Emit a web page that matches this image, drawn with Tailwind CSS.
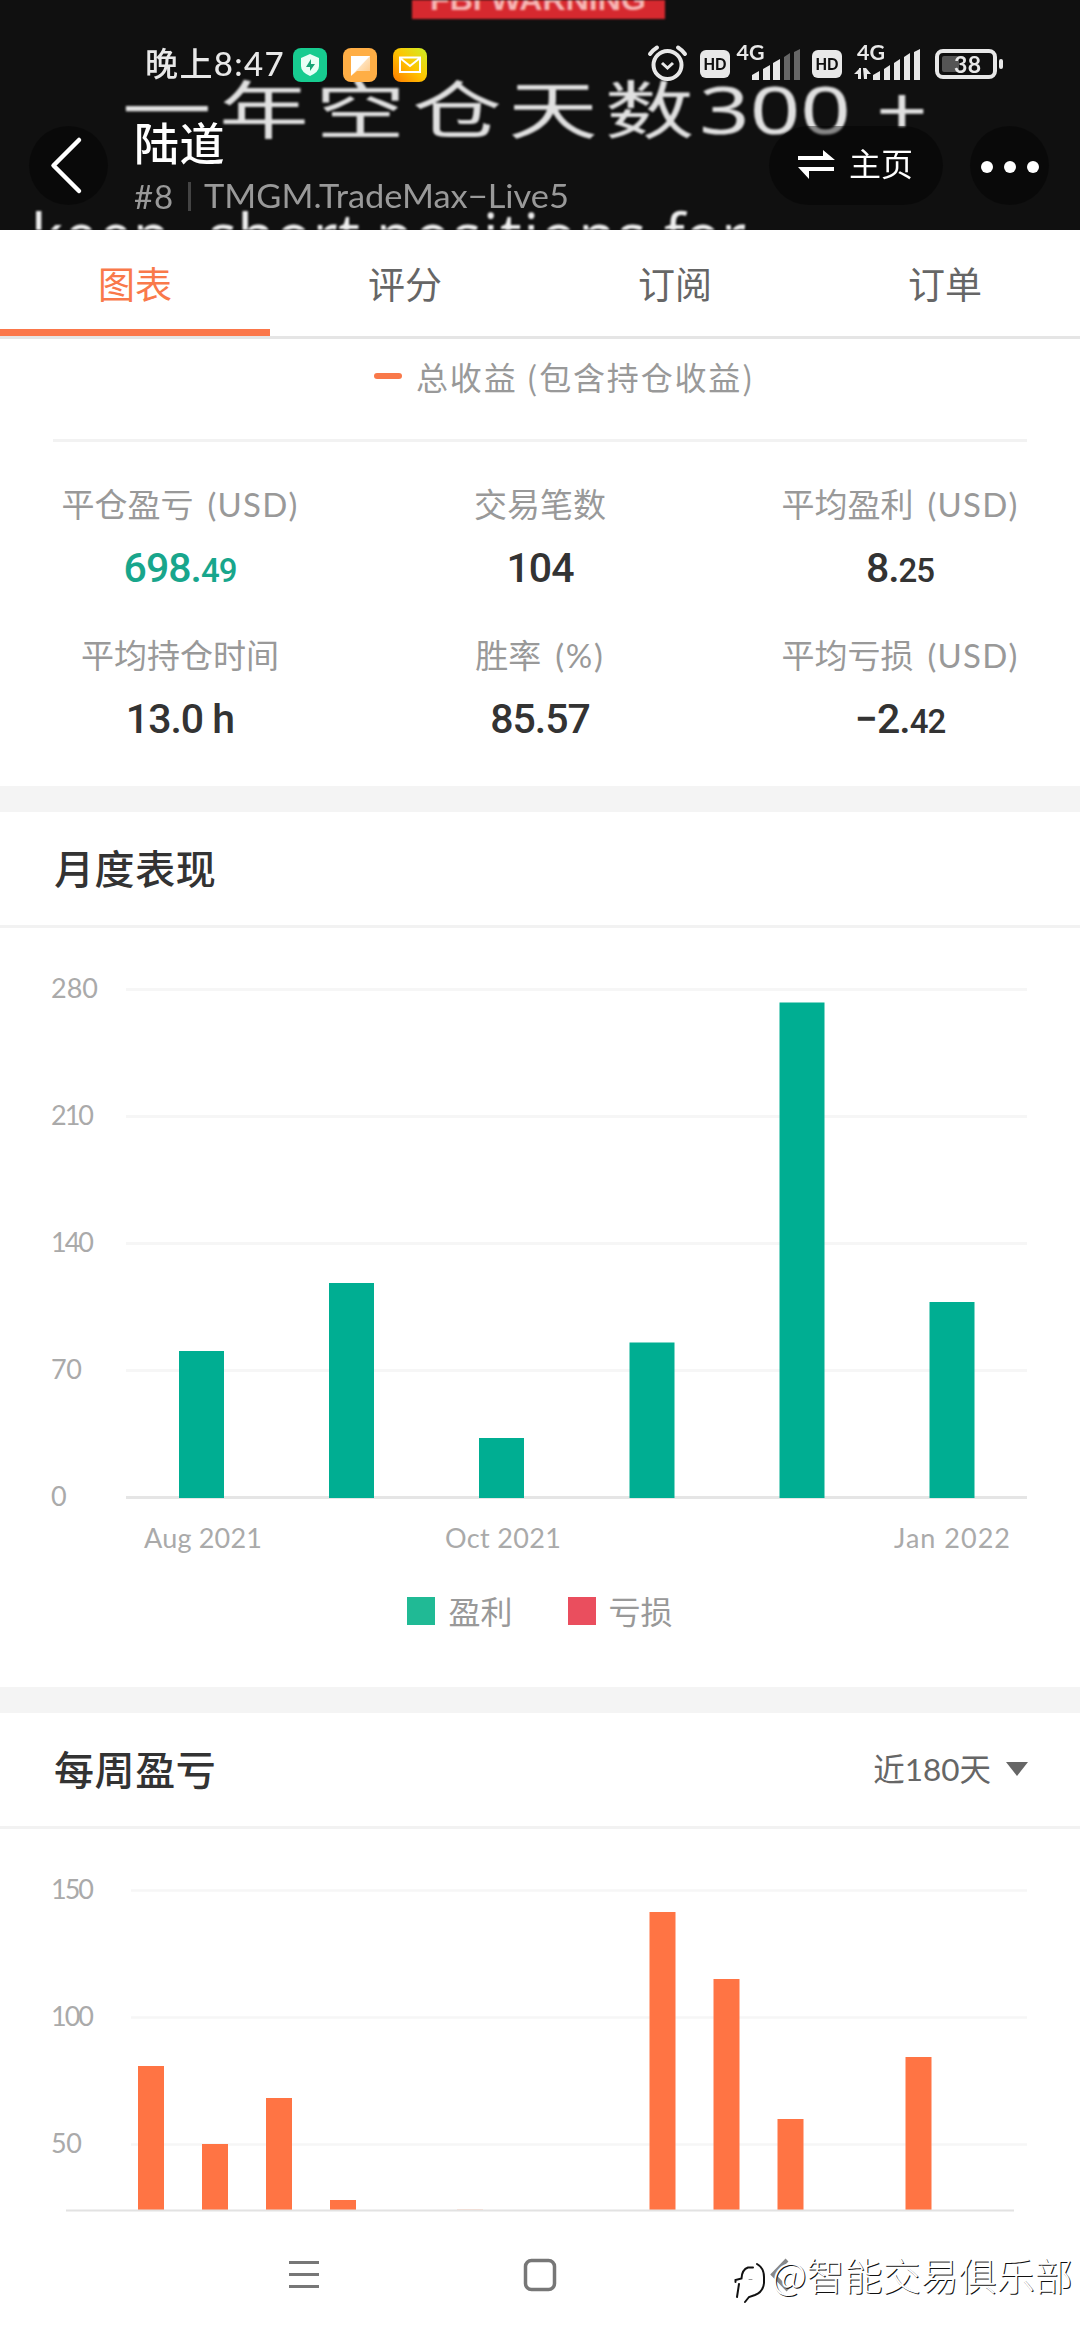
<!DOCTYPE html>
<html lang="zh-CN"><head><meta charset="utf-8"><title>陆道</title>
<script src="https://cdn.jsdelivr.net/npm/@tailwindcss/browser@4"></script></head>
<body class="w-[1080px] h-[2340px] overflow-hidden bg-white font-['Lato','Noto_Sans_CJK_SC',sans-serif] text-[#333]">
<div class="flex flex-col h-full w-full relative">
<header class="h-[230px] shrink-0 bg-[#101010] relative overflow-hidden">
  <!-- banner artwork behind the header -->
  <svg class="absolute inset-0 blur-[0.8px]" width="1080" height="230" viewBox="0 0 1080 230">
    <rect x="412" y="-10" width="253" height="29" fill="#d6292f"/>
    <text x="430" y="10" font-family="Liberation Sans" font-weight="bold" font-size="30" fill="#f6b6b4" textLength="216" lengthAdjust="spacingAndGlyphs">FBI WARNING</text>
    <g fill="#e0e0e0" font-family="Noto Sans CJK SC">
    <text x="0 68.500 136.500 204.500 272 340" y="0" font-size="63" transform="translate(122 133) scale(1.42 1)">一年空仓天数</text>
    <text x="699" y="134" font-size="65" textLength="152" lengthAdjust="spacingAndGlyphs" font-family="Noto Sans">300</text>
    <text x="876" y="134" font-size="66" textLength="52" lengthAdjust="spacingAndGlyphs" font-family="Noto Sans">+</text></g>
    <g font-family="Noto Sans" font-size="60" fill="#eee" lengthAdjust="spacingAndGlyphs"><text x="31" y="257" textLength="139">keep</text><text x="208" y="257" textLength="152">short</text><text x="376" y="257" textLength="270">positions</text><text x="664" y="257" textLength="82">for</text></g>
  </svg>
  <div class="relative flex flex-col h-full">
    <div class="flex items-center h-[50px] mt-[40px] pl-[145px]">
      <span class="text-[33px] leading-none text-[#e8e8e8] font-medium w-[148px] whitespace-nowrap tracking-[1.4px] -mt-[3px]">晚上8:47</span>
      <svg width="134" height="36" viewBox="293 46 134 36">
        <defs><linearGradient id="m" x1="0" y1="1" x2="1" y2="0"><stop offset="0" stop-color="#ff7a00"/><stop offset=".5" stop-color="#ffc400"/><stop offset="1" stop-color="#cdf026"/></linearGradient>
        <linearGradient id="o" x1="0" y1="0" x2="1" y2="1"><stop offset=".48" stop-color="#fff"/><stop offset=".52" stop-color="#ffe0b8"/><stop offset="1" stop-color="#ffc680"/></linearGradient></defs>
        <rect x="293" y="47" width="34" height="34" rx="8" fill="#17cc90"/><path d="M310 53l9 4v8q0 6-9 10q-9-4-9-10v-8z" fill="#e9fff6"/><path d="M311 58l-5 8h4v4l5-7h-4z" fill="#17a577"/>
        <rect x="343" y="47" width="34" height="34" rx="8" fill="#ffae45"/><path d="M351 55h19v15h-13l-6 5z" fill="url(#o)"/>
        <rect x="393" y="47" width="34" height="34" rx="8" fill="url(#m)"/><path d="M400 56.500h20v14.500h-20zM400 57l10 8 10-8" fill="none" stroke="#fff" stroke-width="2"/>
      </svg>
      <svg class="ml-[219px]" width="360" height="50" viewBox="646 40 360 50" font-family="Lato">
        <g fill="none" stroke="#e8e8e8"><circle cx="667.500" cy="65" r="14" stroke-width="4"/><path d="M650 54q3-4 7-6.500M678 47.500q4 2.500 7 6.500" stroke-width="4" stroke-linecap="round"/><path d="M662 63l5.500 5 5.500-5" stroke-width="3"/></g>
        <g fill="#e8e8e8"><rect x="700" y="50" width="30" height="28" rx="6"/><rect x="812" y="50" width="30" height="28" rx="6"/>
        <text x="736.500" y="60" font-size="20" font-weight="bold" textLength="28" lengthAdjust="spacingAndGlyphs">4G</text><text x="857" y="60" font-size="20" font-weight="bold" textLength="28" lengthAdjust="spacingAndGlyphs">4G</text>
        <path d="M752 80v-5l7-4v9zM763 80v-11l7-4v15zM773 80v-17l7-4v21zM873 80v-5l7-4v9zM884 80v-11l6-4v15zM894 80v-17l6-4v21zM904 80v-23l6-4v27zM914 80v-28l6-3v31zM854 74l5-5v-1h2v11h-3v-5zM863 68h3l5 6h-4v5h-3z"/></g>
        <path d="M784 80v-23l6-4v27zM794 80v-28l6-3v31z" fill="#666"/>
        <g fill="#101010" font-weight="900" font-size="17"><text x="703.500" y="70" textLength="23" lengthAdjust="spacingAndGlyphs">HD</text><text x="815.500" y="70" textLength="23" lengthAdjust="spacingAndGlyphs">HD</text></g>
        <rect x="937" y="51" width="58" height="26" rx="6" fill="none" stroke="#e8e8e8" stroke-width="4"/><rect x="942" y="56" width="17" height="16" rx="2" fill="#555"/><rect x="999" y="59" width="4" height="10" rx="2" fill="#e8e8e8"/>
        <text x="954" y="73" font-size="23" font-weight="bold" fill="#e8e8e8" textLength="27">38</text>
      </svg>
    </div>
    <div class="flex items-center h-[140px] pl-[29px] -mt-[1px]">
      <div class="w-[79px] h-[79px] shrink-0 rounded-full bg-black/40 mt-[12px]"><svg width="79" height="79" viewBox="0 0 79 79"><path d="M50 14L24.500 39.500L50 65" fill="none" stroke="#fff" stroke-width="4.500" stroke-linecap="round" stroke-linejoin="round"/></svg></div>
      <div class="flex flex-col pl-[26px] w-[661px] shrink-0 pt-[15px]">
        <div class="text-[45px] leading-[58px] font-medium text-white tracking-[0.5px]">陆道</div>
        <div class="flex items-center text-[33px] leading-[44px] text-[#999] whitespace-nowrap mt-[1px]"><span class="w-[54px] tracking-[0.8px]">#8</span><span class="w-[3px] h-[29px] bg-[#444] mr-[13px]"></span><svg width="368" height="44"><text x="0" y="34" font-size="33" fill="#999" textLength="365" lengthAdjust="spacingAndGlyphs">TMGM.TradeMax−Live5</text></svg></div>
      </div>
      <div class="w-[174px] h-[79px] shrink-0 rounded-full bg-black/40 mt-[12px] flex items-center pl-[28px] text-white text-[32px]"><svg width="38" height="32" viewBox="0 0 38 32"><path d="M1 7h25V1l12 10H1zM37 22H12v8L1 18h36z" fill="#fff"/></svg><span class="ml-[14px] -mt-[2px]">主页</span></div>
      <div class="w-[79px] h-[79px] shrink-0 rounded-full bg-black/40 mt-[12px] ml-[27px] flex items-center justify-center gap-[11px] pt-1"><i class="size-[12px] rounded-full bg-white"></i><i class="size-[12px] rounded-full bg-white"></i><i class="size-[12px] rounded-full bg-white"></i></div>
    </div>
  </div>
</header>
<nav class="grid grid-cols-4 h-[109px] shrink-0 border-b-3 border-[#e5e5e5] text-[37px] text-[#666] text-center leading-[110px]">
  <div class="text-[#f9794a] border-b-7 border-[#fb774a] h-[106px]">图表</div><div>评分</div><div>订阅</div><div>订单</div>
</nav>
<div class="h-[100px] shrink-0 flex items-start pl-[374px] pt-[14px]"><i class="w-[28px] h-[6px] rounded-full bg-[#f9794a] mt-[20px] mr-[14px]"></i><svg width="345" height="48"><text x="0" y="37" font-size="32" fill="#999" font-family="Noto Sans CJK SC" textLength="337">总收益 (包含持仓收益)</text></svg></div>
<div class="h-[3px] shrink-0 mx-[53px] bg-[#f2f2f2]"></div>
<section class="h-[344px] shrink-0 grid grid-cols-3 auto-rows-[151px] pt-[38px] text-center">
  <div><div class="text-[33px] leading-[48px] text-[#999] word-spacing-normal">平仓盈亏<span class="ml-[14px] tracking-[1.2px]">(USD)</span></div><div class="font-['Roboto'] font-medium text-[41px] leading-[80px] tracking-[-1px] text-[#18a68c]">698.<span class="text-[33px]">49</span></div></div>
  <div><div class="text-[33px] leading-[48px] text-[#999]">交易笔数</div><div class="font-['Roboto'] font-medium text-[41px] leading-[80px] tracking-[-1px]">104</div></div>
  <div><div class="text-[33px] leading-[48px] text-[#999]">平均盈利<span class="ml-[14px] tracking-[1.2px]">(USD)</span></div><div class="font-['Roboto'] font-medium text-[41px] leading-[80px] tracking-[-1px]">8.<span class="text-[33px]">25</span></div></div>
  <div><div class="text-[33px] leading-[48px] text-[#999]">平均持仓时间</div><div class="font-['Roboto'] font-medium text-[41px] leading-[80px] tracking-[-1px]">13.0 h</div></div>
  <div><div class="text-[33px] leading-[48px] text-[#999]">胜率<span class="ml-[14px] tracking-[1.8px]">(%)</span></div><div class="font-['Roboto'] font-medium text-[41px] leading-[80px] tracking-[-1px]">85.57</div></div>
  <div><div class="text-[33px] leading-[48px] text-[#999]">平均亏损<span class="ml-[14px] tracking-[1.2px]">(USD)</span></div><div class="font-['Roboto'] font-medium text-[41px] leading-[80px] tracking-[-1px]">−2.<span class="text-[33px]">42</span></div></div>
</section>
<div class="h-[26px] shrink-0 bg-[#f4f4f4]"></div>
<h2 class="h-[116px] shrink-0 border-b-3 border-[#f2f2f2] pl-[54px] text-[40px] leading-[115px] font-medium tracking-[0.6px]">月度表现</h2>
<svg class="shrink-0" width="1080" height="652" viewBox="0 928 1080 652" font-size="27" fill="#aaa">
  <path d="M126 989.500H1027M126 1116.500H1027M126 1243.500H1027M126 1370.500H1027" stroke="#f6f6f6" stroke-width="3"/><path d="M126 1497.500H1027" stroke="#e5e5e5" stroke-width="3"/>
  <path fill="#00ae92" d="M179 1351h45v147h-45zM329 1283h45v215h-45zM479 1438h45v60h-45zM629.500 1342.500h45v155.500h-45zM779.500 1002.500h45v495.500h-45zM929.500 1302h45v196h-45z"/>
  <text x="51" y="998" textLength="47">280</text><text x="51" y="1125" textLength="43">210</text><text x="51" y="1252" textLength="43">140</text><text x="51" y="1379" textLength="31">70</text><text x="51" y="1506">0</text>
  <text x="144" y="1548" textLength="118">Aug 2021</text><text x="445" y="1548" textLength="116">Oct 2021</text><text x="894" y="1548" textLength="116">Jan 2022</text>
</svg>
<div class="h-[107px] shrink-0 flex items-start justify-center pt-[8px] text-[32px] leading-[48px] text-[#999]"><i class="size-[28px] bg-[#20ba95] mt-[9px] mr-[13px]"></i><span>盈利</span><i class="size-[28px] bg-[#ea4e5e] mt-[9px] ml-[55px] mr-[13px]"></i><span>亏损</span></div>
<div class="h-[26px] shrink-0 bg-[#f4f4f4]"></div>
<div class="h-[116px] shrink-0 border-b-3 border-[#f2f2f2] pl-[54px] pr-[51px] flex items-center"><h2 class="text-[40px] font-medium grow tracking-[0.6px]">每周盈亏</h2><span class="text-[31.5px] text-[#666] mr-[14px] mt-[1px]">近180天</span><svg width="24" height="15"><path d="M1 0h22L12 14z" fill="#666"/></svg></div>
<svg class="shrink-0" width="1080" height="391" viewBox="0 1829 1080 391" font-size="27" fill="#aaa">
  <path d="M131 1890.500H1027M131 2017.500H1027M131 2144.500H1027" stroke="#f6f6f6" stroke-width="2.500"/>
  <path fill="#ff7444" d="M138 2066h26v144h-26zM202 2144h26v66h-26zM266 2098h26v112h-26zM330 2200h26v10h-26zM649.500 1912h26v298h-26zM713.500 1979h26v231h-26zM777.500 2119h26v91h-26zM905.500 2057h26v153h-26z"/><path d="M457 2209h26v1h-26z" fill="#ffdccf"/>
  <path d="M66 2210.500H1014" stroke="#e2e2e2" stroke-width="2"/>
  <text x="51" y="1899" textLength="43">150</text><text x="51" y="2026" textLength="43">100</text><text x="51" y="2153" textLength="31">50</text>
</svg>
<footer class="h-[120px] shrink-0">
 <svg width="1080" height="120" viewBox="0 2220 1080 120"><g fill="none" stroke="#777"><path d="M289 2262.500h30M289 2274.500h30M289 2286.500h30" stroke-width="3"/><rect x="525.500" y="2260.500" width="29" height="29" rx="6" stroke-width="3.500"/></g>
 <path d="M787 2260L773 2274.500L788 2290" fill="none" stroke="#888" stroke-width="4"/>
 <g fill="none" stroke="#111" stroke-width="2" stroke-linecap="round"><path d="M757 2264q7 4 7 13v6q-1 9-9 12l-6 2-4 5"/><path d="M753 2267.500h-5q-6 2-6.500 11l-6 1.500v2M739 2284l-2 13"/><path d="M749 2279.500h3" stroke-width="1" stroke="#999"/></g>
 <g font-family="Noto Sans CJK SC" font-size="38" font-weight="300"><text x="773" y="2291" fill="#111">@智能交易俱乐部</text><text x="772" y="2290" fill="#fff">@智能交易俱乐部</text></g>
 </svg>
</footer>
</div></body></html>
